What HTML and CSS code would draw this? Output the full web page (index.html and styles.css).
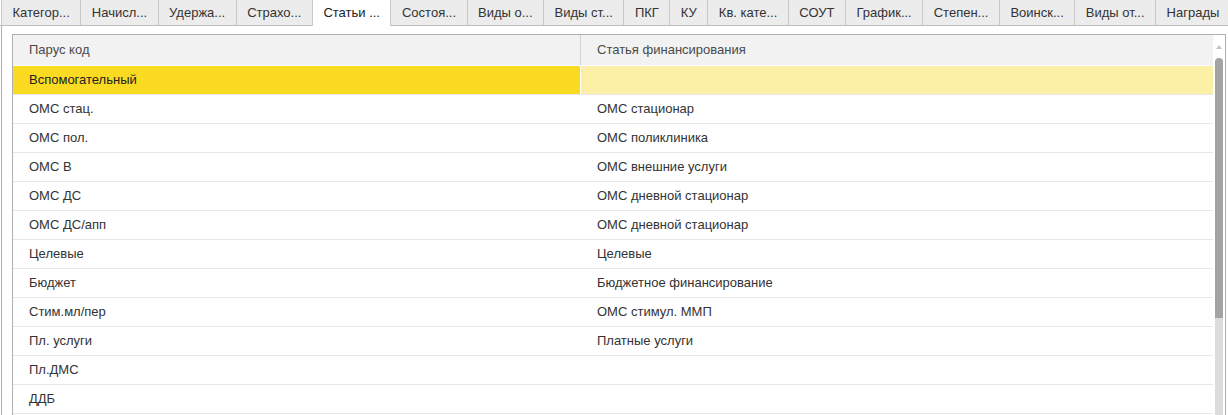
FILE: index.html
```html
<!DOCTYPE html>
<html lang="ru">
<head>
<meta charset="utf-8">
<title>Статьи финансирования</title>
<link rel="stylesheet" href="styles.css">
</head>
<body>
<div class="tabs">
  <div class="tab">Категор...</div>
  <div class="tab">Начисл...</div>
  <div class="tab">Удержа...</div>
  <div class="tab">Страхо...</div>
  <div class="tab active">Статьи ...</div>
  <div class="tab">Состоя...</div>
  <div class="tab">Виды о...</div>
  <div class="tab">Виды ст...</div>
  <div class="tab">ПКГ</div>
  <div class="tab">КУ</div>
  <div class="tab">Кв. кате...</div>
  <div class="tab">СОУТ</div>
  <div class="tab">График...</div>
  <div class="tab">Степен...</div>
  <div class="tab">Воинск...</div>
  <div class="tab">Виды от...</div>
  <div class="tab">Награды</div>
</div>
<div class="panel">
  <div class="grid">
    <div class="grid-main">
      <div class="row head"><div class="cell c1">Парус код</div><div class="cell c2">Статья финансирования</div></div>
      <div class="row sel"><div class="cell c1">Вспомогательный</div><div class="cell c2"></div></div>
      <div class="row"><div class="cell c1">ОМС стац.</div><div class="cell c2">ОМС стационар</div></div>
      <div class="row"><div class="cell c1">ОМС пол.</div><div class="cell c2">ОМС поликлиника</div></div>
      <div class="row"><div class="cell c1">ОМС В</div><div class="cell c2">ОМС внешние услуги</div></div>
      <div class="row"><div class="cell c1">ОМС ДС</div><div class="cell c2">ОМС дневной стационар</div></div>
      <div class="row"><div class="cell c1">ОМС ДС/апп</div><div class="cell c2">ОМС дневной стационар</div></div>
      <div class="row"><div class="cell c1">Целевые</div><div class="cell c2">Целевые</div></div>
      <div class="row"><div class="cell c1">Бюджет</div><div class="cell c2">Бюджетное финансирование</div></div>
      <div class="row"><div class="cell c1">Стим.мл/пер</div><div class="cell c2">ОМС стимул. ММП</div></div>
      <div class="row"><div class="cell c1">Пл. услуги</div><div class="cell c2">Платные услуги</div></div>
      <div class="row"><div class="cell c1">Пл.ДМС</div><div class="cell c2"></div></div>
      <div class="row"><div class="cell c1">ДДБ</div><div class="cell c2"></div></div>
    </div>
    <div class="vscroll">
      <div class="arrow"><span class="tri"></span></div>
      <div class="thumb"></div>
      <div class="track"></div>
    </div>
  </div>
</div>
</body>
</html>
```

FILE: styles.css
```css
* { box-sizing: border-box; }
html, body {
  margin: 0;
  padding: 0;
  height: 415px;
  overflow: hidden;
  background: #fff;
}
body {
  font-family: "Liberation Sans", Arial, sans-serif;
  font-size: 13px;
  color: #333;
}
.tabs {
  display: flex;
  height: 26px;
  border-bottom: 1px solid #bdbdbd;
  padding-left: 1px;
}
.tab {
  height: 25px;
  line-height: 25px;
  padding: 0 10.5px;
  background: #ececec;
  border-right: 1px solid #c9c9c9;
  white-space: nowrap;
  color: #333;
}
.tab:first-child {
  border-left: 1px solid #c9c9c9;
}
.tab.active {
  background: #fff;
  height: 26px;
  color: #222;
  border-left: 1px solid #c9c9c9;
  margin-left: -1px;
  border-right: 1px solid #c9c9c9;
}
.panel {
  height: 389px;
  margin-left: 1px;
  border-left: 1px solid #b0b0b0;
  padding: 8px 2px 0 10px;
  overflow: hidden;
}
.grid {
  display: flex;
  border: 1px solid #b0b0b0;
  height: 400px;
}
.grid-main {
  flex: 1;
}
.row {
  display: flex;
  height: 29px;
  border-bottom: 1px solid #e8e8e8;
}
.cell {
  padding-left: 16px;
  line-height: 28px;
  white-space: nowrap;
  overflow: hidden;
}
.c1 {
  width: 568px;
  border-right: 1px solid #fff;
}
.c2 {
  flex: 1;
}
.row.head {
  height: 31px;
  background: #f2f2f2;
  border-bottom: 1px solid #fbfbfb;
  color: #4a4a4a;
}
.row.head .cell {
  line-height: 30px;
}
.row.head .c1 {
  border-right-color: #d2d2d2;
}
.row.sel .c1 {
  background: #fadb22;
  color: #222;
}
.row.sel .c2 {
  background: #fbf0a6;
}
.vscroll {
  width: 12px;
  display: flex;
  flex-direction: column;
  align-items: center;
  background: #fff;
}
.arrow {
  height: 23px;
  width: 12px;
  display: flex;
  align-items: center;
  justify-content: center;
}
.tri {
  width: 0;
  height: 0;
  border-left: 3px solid transparent;
  border-right: 3px solid transparent;
  border-bottom: 4px solid #c4c4c4;
}
.thumb {
  width: 8px;
  height: 260px;
  background: #a3a3a3;
  border-radius: 4px 4px 0 0;
}
.track {
  width: 8px;
  flex: 1;
  background: #dcdcdc;
}
```
